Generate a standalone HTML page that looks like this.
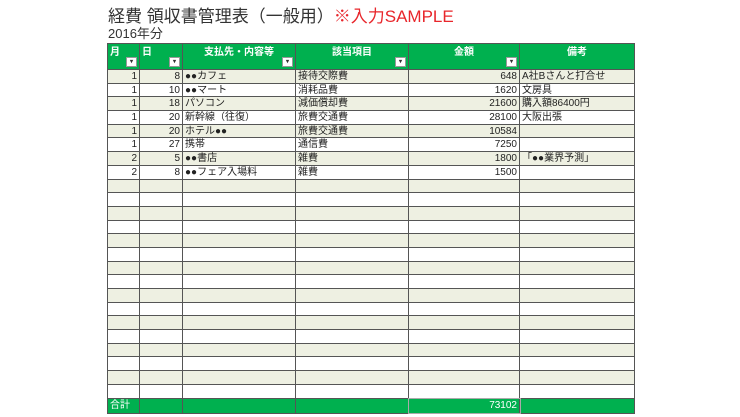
<!DOCTYPE html>
<html><head><meta charset="utf-8"><style>
body{margin:0;width:740px;height:417px;background:#fff;position:relative;overflow:hidden;font-family:"Liberation Sans","Noto Sans CJK JP",sans-serif;}
.t{position:absolute;left:108px;top:2px;font-size:17px;color:#333;white-space:nowrap}
.t span{color:#e8262b}
.y{position:absolute;left:108px;top:23px;font-size:13px;color:#333}
.tb{position:absolute;left:107px;top:43px;width:527px;border-top:1px solid #555;border-left:1px solid #555;font-size:10px;color:#222}
.r{display:flex;height:13.7px;box-sizing:border-box;border-bottom:1px solid #555}
.r>div{box-sizing:border-box;border-right:1px solid #555;padding:0 2px;white-space:nowrap;overflow:hidden;line-height:13px;position:relative}
.r>div:nth-child(1){width:32px}.r>div:nth-child(2){width:43px}.r>div:nth-child(3){width:113px}.r>div:nth-child(4){width:113px}.r>div:nth-child(5){width:111px}.r>div:nth-child(6){width:115px}
.h{height:26px;background:#00b04f;color:#fff;font-weight:bold}
.h>div{text-align:center;padding-top:2px}
.h>div.l{text-align:left}
.dd{position:absolute;right:2px;bottom:2px;width:11px;height:10px;background:#fff;border:1px solid #999;font-size:6px;color:#333;line-height:9px;text-align:center;box-sizing:border-box}
.e{background:#eef0e2}
.n{text-align:right}
.f{background:#00b04f;color:#fff;height:15px}
.g{position:absolute;left:635px;width:20px;height:1px;background:#e6e6e6}
</style></head><body>
<div class="t">経費 領収書管理表（一般用）<span>※入力SAMPLE</span></div>
<div class="y">2016年分</div>
<div class="tb">
<div class="r h"><div class="l">月<span class="dd">▾</span></div><div class="l">日<span class="dd">▾</span></div><div>支払先・内容等<span class="dd">▾</span></div><div>該当項目<span class="dd">▾</span></div><div>金額<span class="dd">▾</span></div><div>備考</div></div>
<div class="r e"><div class="n">1</div><div class="n">8</div><div>●●カフェ</div><div>接待交際費</div><div class="n">648</div><div>A社Bさんと打合せ</div></div>
<div class="r"><div class="n">1</div><div class="n">10</div><div>●●マート</div><div>消耗品費</div><div class="n">1620</div><div>文房具</div></div>
<div class="r e"><div class="n">1</div><div class="n">18</div><div>パソコン</div><div>減価償却費</div><div class="n">21600</div><div>購入額86400円</div></div>
<div class="r"><div class="n">1</div><div class="n">20</div><div>新幹線（往復）</div><div>旅費交通費</div><div class="n">28100</div><div>大阪出張</div></div>
<div class="r e"><div class="n">1</div><div class="n">20</div><div>ホテル●●</div><div>旅費交通費</div><div class="n">10584</div><div></div></div>
<div class="r"><div class="n">1</div><div class="n">27</div><div>携帯</div><div>通信費</div><div class="n">7250</div><div></div></div>
<div class="r e"><div class="n">2</div><div class="n">5</div><div>●●書店</div><div>雑費</div><div class="n">1800</div><div>「●●業界予測」</div></div>
<div class="r"><div class="n">2</div><div class="n">8</div><div>●●フェア入場料</div><div>雑費</div><div class="n">1500</div><div></div></div>
<div class="r e"><div></div><div></div><div></div><div></div><div></div><div></div></div>
<div class="r"><div></div><div></div><div></div><div></div><div></div><div></div></div>
<div class="r e"><div></div><div></div><div></div><div></div><div></div><div></div></div>
<div class="r"><div></div><div></div><div></div><div></div><div></div><div></div></div>
<div class="r e"><div></div><div></div><div></div><div></div><div></div><div></div></div>
<div class="r"><div></div><div></div><div></div><div></div><div></div><div></div></div>
<div class="r e"><div></div><div></div><div></div><div></div><div></div><div></div></div>
<div class="r"><div></div><div></div><div></div><div></div><div></div><div></div></div>
<div class="r e"><div></div><div></div><div></div><div></div><div></div><div></div></div>
<div class="r"><div></div><div></div><div></div><div></div><div></div><div></div></div>
<div class="r e"><div></div><div></div><div></div><div></div><div></div><div></div></div>
<div class="r"><div></div><div></div><div></div><div></div><div></div><div></div></div>
<div class="r e"><div></div><div></div><div></div><div></div><div></div><div></div></div>
<div class="r"><div></div><div></div><div></div><div></div><div></div><div></div></div>
<div class="r e"><div></div><div></div><div></div><div></div><div></div><div></div></div>
<div class="r"><div></div><div></div><div></div><div></div><div></div><div></div></div>
<div class="r f"><div>合計</div><div></div><div></div><div></div><div class="n" style="outline:1px solid #aaa">73102</div><div></div></div>
</div>
</body></html>
